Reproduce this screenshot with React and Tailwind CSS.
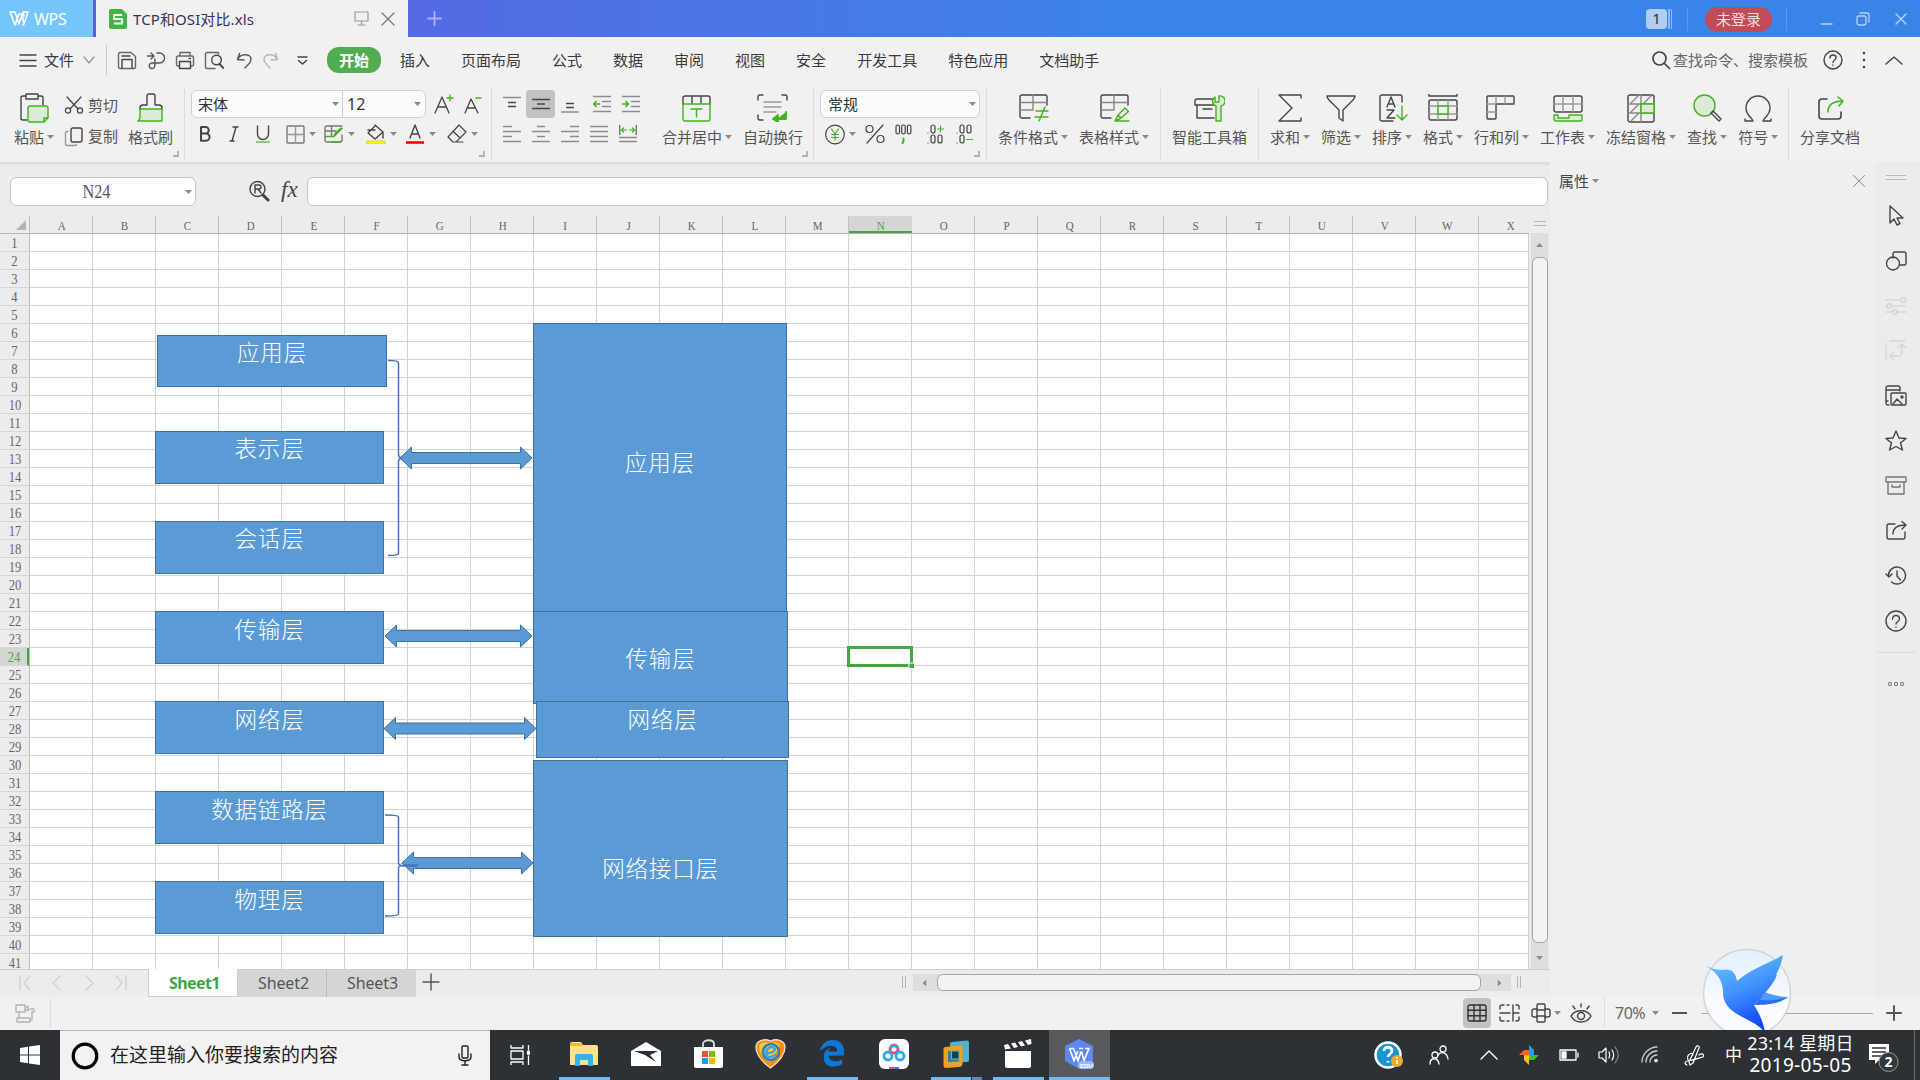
import React from "react";

const G = "#41b31d";
const D = "#444";

const Svg = ({ w, h, className = "", children, sw = 1.4, c = D }) => (
  <svg
    width={w}
    height={h}
    viewBox={`0 0 ${w} ${h}`}
    fill="none"
    stroke={c}
    strokeWidth={sw}
    strokeLinecap="round"
    strokeLinejoin="round"
    className={`shrink-0 ${className}`}
  >
    {children}
  </svg>
);

const Caret = ({ className = "" }) => (
  <svg width="7" height="4" viewBox="0 0 7 4" className={`shrink-0 ${className}`}>
    <path d="M0 0h7L3.5 4z" fill="#8a8a8a" />
  </svg>
);

const Corner = () => (
  <Svg w={6} h={6} sw={1.8} c="#b0b0b0"><path d="M5 0v5H0" strokeLinecap="butt" strokeLinejoin="miter" /></Svg>
);

const BigButton = ({ label, drop, children }) => (
  <div className="flex flex-col items-center shrink-0">
    <div className="h-[38px] flex items-center justify-center pr-[1px]">{children}</div>
    <div className="flex items-center h-[19px] mt-px -mb-px">
      <span>{label}</span>
      {drop && <Caret className="ml-[3px] mr-px mb-0.5" />}
    </div>
  </div>
);

const DropIcon = ({ children }) => (
  <div className="flex items-center gap-[4px] w-[31px] shrink-0">
    <div className="w-[20px] flex justify-center">{children}</div>
    <Caret />
  </div>
);

const Slot = ({ children, active }) => (
  <div className={`w-[29px] h-[28px] flex items-center justify-center shrink-0 rounded ${active ? "bg-[#c2c2c2]" : ""}`}>
    {children}
  </div>
);

/* horizontal rules used by the alignment buttons: [x1, x2, y, color] */
const Rules = ({ lines, w = 18, h = 18, children }) => (
  <svg width={w} height={h} viewBox={`0 0 ${w} ${h}`} fill="none" strokeWidth="1.5" className="shrink-0">
    {lines.map(([a, b, y, c], i) => (
      <path key={i} d={`M${a} ${y}H${b}`} stroke={c || "#8c8c8c"} />
    ))}
    {children}
  </svg>
);

const Group = ({ className, children }) => (
  <div className={`flex shrink-0 h-[72px] mt-[3px] border-r border-[#dcdcdc] ${className}`}>{children}</div>
);

const TitleBar = () => (
  <div className="h-[37px] flex bg-linear-to-r from-[#5a5ee0] from-5% to-[#3a84e7] to-60%">
    <div className="w-[93px] mr-[3px] bg-[#76c6fd] flex items-center text-white text-[16px] pl-[9px] gap-[5px]">
      <Svg w={20} h={15} c="#fff" sw={1.6}>
        <path d="M1 1h5l4 12 3-9M1 1l5 13L10 3h3l-2 0M13 4l2 9L19 1h-5l1 4M6 14l1-1M15 13l-1 1" />
      </Svg>
      <span className="tracking-[-0.3px]">WPS</span>
    </div>
    <div className="w-[312px] bg-[#f1f1f1] flex items-center pl-[13px]">
      <svg width="18" height="20" viewBox="0 0 18 20">
        <path d="M2 0h11l5 5v13a2 2 0 0 1-2 2H2a2 2 0 0 1-2-2V2a2 2 0 0 1 2-2z" fill="#45b245" />
        <path d="M13 6H5v4h8v4.5H5" fill="none" stroke="#fff" strokeWidth="1.8" />
      </svg>
      <span className="ml-[6px] w-[221px] text-[15px] tracking-[0.100px] text-[#34345a] whitespace-nowrap pt-px">TCP和OSI对比.xls</span>
      <Svg w={15} h={15} c="#9a9a9a" sw={1.2}><path d="M1 1h13v9H1zM7.500 10v4M4 14h7" /></Svg>
      <Svg w={14} h={14} c="#777" sw={1.2} className="ml-[12px]"><path d="M1 1l12 12M13 1L1 13" /></Svg>
    </div>
    <div className="w-[52px] flex items-center justify-center">
      <Svg w={15} h={15} c="#a9b6f4" sw={1.8}><path d="M7.500 1v13M1 7.500h13" /></Svg>
    </div>
    <div className="flex-1" />
    <div className="flex items-center text-[15px]">
      <div className="w-[21px] h-[20px] rounded-sm bg-[#b0cdf6] text-[#333] flex items-center justify-center">1</div>
      <div className="w-[2px] h-[20px] bg-[#93bbf2] ml-px" />
      <div className="w-[1px] h-[20px] bg-[#93bbf2] ml-px" />
      <div className="w-px h-[24px] bg-[#5c9aec] ml-[15px]" />
      <div className="w-[67px] h-[25px] ml-[17px] mt-[2px] rounded-full bg-[#c14b56] text-[#f3dcdf] flex items-center justify-center">未登录</div>
      <div className="w-px h-[24px] bg-[#5c9aec] ml-[14px]" />
      <Svg w={13} h={13} c="#b9d4f8" className="ml-[33px]"><path d="M1 12h11" /></Svg>
      <Svg w={14} h={14} c="#b9d4f8" sw={1.3} className="ml-[23px]">
        <rect x="1" y="4" width="9" height="9" rx="2" /><path d="M4 1h7a2 2 0 0 1 2 2v7" />
      </Svg>
      <Svg w={12} h={12} c="#b9d4f8" className="ml-[25px] mr-[13px]"><path d="M1 1l10 10M11 1L1 11" /></Svg>
    </div>
  </div>
);

const menus = ["插入", "页面布局", "公式", "数据", "审阅", "视图", "安全", "开发工具", "特色应用", "文档助手"];

const MenuBar = () => (
  <div className="h-[48px] bg-[#f1f1f1] flex items-center text-[15px] text-[#3a3a3a] pb-[2px]">
    <Svg w={18} h={13} className="ml-[19px]"><path d="M1 1h16M1 6.500h16M1 12h16" /></Svg>
    <span className="ml-[7px]">文件</span>
    <Svg w={12} h={8} c="#999" className="ml-[9px]"><path d="M1 1l5 6 5-6" /></Svg>
    <div className="w-px h-[30px] bg-[#c9c9c9] ml-[11px] mr-[10px]" />
    <div className="flex gap-[9px] items-center">
      <Svg w={20} h={19}>
        <path d="M3 1.500h11l4.500 4v10.500a1.500 1.500 0 0 1-1.500 1.500H3a1.500 1.500 0 0 1-1.500-1.500V3A1.500 1.500 0 0 1 3 1.500z" stroke="#666" />
        <path d="M5 17V8.500h10V17M5 5h8" />
      </Svg>
      <Svg w={20} h={19}>
        <path d="M1.500 5h6M5 2l3 3-3 3M11 2h2.500a5 5 0 0 1 0 10H6.500a2.800 2.800 0 1 0 2.300 3V8" stroke="#555" />
      </Svg>
      <Svg w={20} h={19}>
        <path d="M5 5V1.500h10V5M4.500 15H3a1.500 1.500 0 0 1-1.500-1.500v-7A1.500 1.500 0 0 1 3 5h14a1.500 1.500 0 0 1 1.500 1.500v7A1.500 1.500 0 0 1 17 15h-1" stroke="#666" />
        <path d="M4.500 10.500h11v7h-11zM14 7.500h1.500" />
      </Svg>
      <Svg w={20} h={19}>
        <path d="M14.500 3V1.500H3A1.500 1.500 0 0 0 1.500 3v13A1.500 1.500 0 0 0 3 17.500h8" stroke="#666" />
        <circle cx="12.500" cy="9" r="4.800" /><path d="M15.500 13l4 4" strokeWidth="1.900" />
      </Svg>
      <Svg w={20} h={19} className="ml-px">
        <path d="M5.500 2.500L3.500 8.500l6.500.5M4 8c2-5 13-6.500 13 .5 0 4-3.500 5-6 8.500" stroke="#555" />
      </Svg>
      <Svg w={18} h={19} c="#b5b5b5">
        <path d="M12.500 2.500l2 6-6.500.5M14 8C12 3 1 1.500 1 8.500c0 4 3.500 5 6 8.500" />
      </Svg>
      <Svg w={11} h={9} className="ml-[7px]" sw={1.500}><path d="M1 1h9M1.500 4.500l4 3.500 4-3.500" /></Svg>
    </div>
    <div className="w-[54px] h-[26px] rounded-xl bg-[#52ac52] text-white font-bold flex items-center justify-center ml-[19px] mr-[19px]">
      开始
    </div>
    <div className="flex gap-[31px] whitespace-nowrap">
      {menus.map((m) => (
        <span key={m}>{m}</span>
      ))}
    </div>
    <div className="flex-1" />
    <Svg w={20} h={20} sw={1.7} className="mr-px"><circle cx="8.500" cy="8.500" r="6.500" /><path d="M13.500 13.500l5 5" /></Svg>
    <span className="text-[#666] ml-px">查找命令、搜索模板</span>
    <Svg w={20} h={20} className="ml-[15px]">
      <circle cx="10" cy="10" r="9" /><path d="M7 8c0-4 6-4 6 0 0 2-3 2-3 4.500M10 15v.2" />
    </Svg>
    <Svg w={4} h={18} sw={2.600} className="ml-[19px]"><path d="M2 2v.1M2 9v.1M2 16v.1" /></Svg>
    <Svg w={18} h={10} className="ml-[19px] mr-[17px]"><path d="M1 9l8-7 8 7" /></Svg>
  </div>
);

const TableBase = () => (
  <>
    <path d="M11 24H3a2 2 0 0 1-2-2V3a2 2 0 0 1 2-2h23a2 2 0 0 1 2 2v8" />
    <path d="M1 8.500h27M1 16h12M14 1v15" stroke="#888" />
  </>
);

const Ribbon = () => (
  <div className="h-[77px] bg-[#f1f1f1] flex text-[15px] leading-[19px] text-[#555] whitespace-nowrap">
    <Group className="w-[185px]">
      <div className="ml-[14px] mt-px">
        <BigButton label="粘贴" drop>
          <Svg w={30} h={30}>
            <path d="M7 3H4a2 2 0 0 0-2 2v20a2 2 0 0 0 2 2h4M19 3h3a2 2 0 0 1 2 2v7M7 1h12v5H7z" />
            <path d="M11 13h16a2 2 0 0 1 2 2v10l-4 4H11a2 2 0 0 1-2-2V15a2 2 0 0 1 2-2zM29 25h-4v4" stroke={G} fill="#dcebd8" />
          </Svg>
        </BigButton>
      </div>
      <div className="ml-[9px] w-[54px]">
        <div className="flex items-center gap-[4px] h-[34px]">
          <Svg w={20} h={18} sw={1.200}>
            <path d="M3 1l11 12M17 1L6 13" /><circle cx="4" cy="14.500" r="2.600" /><circle cx="16" cy="14.500" r="2.600" />
          </Svg>
          剪切
        </div>
        <div className="flex items-center gap-[4px] h-[29px]">
          <Svg w={20} h={20}><rect x="7" y="1" width="11" height="14" rx="2" /><path d="M4 4.500H3A1.500 1.500 0 0 0 1.500 6v11A1.500 1.500 0 0 0 3 18.500h8a1.500 1.500 0 0 0 1.500-1" stroke="#999" /></Svg>
          复制
        </div>
      </div>
      <div className="ml-[10px] mt-px">
        <BigButton label="格式刷">
          <Svg w={28} h={30} className="mr-[-2px]">
            <path d="M3 16v-1a3 3 0 0 1 3-3h4V3a2 2 0 0 1 2-2h4a2 2 0 0 1 2 2v9h4a3 3 0 0 1 3 3v1" />
            <path d="M3 16h22v12H1c2-1 2-3 2-5z" stroke={G} fill="#dcebd8" />
          </Svg>
        </BigButton>
      </div>
      <div className="self-end mb-[3px]"><Corner /></div>
    </Group>

    <Group className="w-[307px] flex-col">
      <div className="flex items-center ml-[6px] mt-[2px] h-[28px]">
        <div className="w-[235px] h-[28px] rounded-md border border-[#cfcfcf] bg-[#fbfbfb] flex items-center text-[#333]">
          <div className="w-[151px] h-full border-r border-[#cfcfcf] flex items-center justify-between pl-[6px] pr-[3px]">宋体<Caret /></div>
          <div className="flex-1 flex items-center justify-between pl-[4px] pr-[4px] text-[16px]">12<Caret /></div>
        </div>
        <Svg w={20} h={20} className="ml-[8px]" sw={1.3}>
          <path d="M1 19L8 3l7 16M4 13h8" /><path d="M16 1v6M13 4h6" stroke={G} />
        </Svg>
        <Svg w={18} h={20} className="ml-[10px]" sw={1.3}>
          <path d="M1 19L7 5l7 14M3.500 14h7" /><path d="M12 4h5" stroke={G} />
        </Svg>
      </div>
      <div className="flex items-center ml-[5px] mt-[3px] h-[26px]">
        <Slot><Svg w={12} h={16} sw={2}><path d="M2 1h4.500a3.200 3.200 0 0 1 0 6.500H2zM2 7.500h5a3.600 3.600 0 0 1 0 7.200H2z" /></Svg></Slot>
        <Slot><Svg w={10} h={16}><path d="M4 1h5M1 15h4M7 1L3 15" /></Svg></Slot>
        <Slot>
          <Svg w={14} h={18}><path d="M1.500 1v8a5.500 5.500 0 0 0 11 0V1" /><path d="M0 17h14" stroke="#8fd07c" strokeWidth="2" /></Svg>
        </Slot>
        <div className="flex ml-[8px]">
          <DropIcon><Svg w={19} h={19}><rect x="1" y="1" width="17" height="17" rx="1" stroke="#777" /><path d="M9.500 1v17M1 9.500h17" stroke="#999" /></Svg></DropIcon>
          <div className="ml-[8px]">
            <DropIcon>
              <Svg w={20} h={19}>
                <path d="M18 11v5a2 2 0 0 1-2 2H3a2 2 0 0 1-2-2V4a2 2 0 0 1 2-2h15M7.500 2v10M1 7h11" stroke="#777" />
                <path d="M1 12.500h9l8-8M10 12.500l1-3 6-5.500M8 18h8" stroke={G} />
              </Svg>
            </DropIcon>
          </div>
          <div className="ml-[11px]">
            <DropIcon>
              <Svg w={20} h={20}>
                <path d="M9 1l8 7-8 7-7-6 7-7M2 6h7M17 8v6" /><rect x="1" y="17" width="18" height="3" fill="#ff0" stroke="#bdb800" strokeWidth=".6" />
              </Svg>
            </DropIcon>
          </div>
          <div className="ml-[8px]">
            <DropIcon>
              <Svg w={18} h={20}><path d="M4 14L9 1l5 13M5.500 10h7" /><path d="M0 18.500h18" stroke="red" strokeWidth="2.600" strokeLinecap="butt" /></Svg>
            </DropIcon>
          </div>
          <div className="ml-[11px]">
            <DropIcon>
              <Svg w={20} h={19} sw={1.200}><path d="M12 1l7 7-10 10H6l-5-5zM6 7l7 7M9 18h7" /></Svg>
            </DropIcon>
          </div>
        </div>
      </div>
      <div className="self-end mr-[6px] mt-[4px]"><Corner /></div>
    </Group>

    <Group className="w-[322px]">
      <div className="ml-[5px] mt-[2px] w-[150px]">
        <div className="flex">
          <Slot><Rules lines={[[0, 18, 2.500], [5, 13, 7.500, D], [5, 13, 11.500, D]]} /></Slot>
          <Slot active><Rules lines={[[0, 18, 4.500, D], [5, 13, 9, D], [0, 18, 13.500, D]]} /></Slot>
          <Slot><Rules lines={[[5, 13, 8.500, D], [5, 13, 12.500, D], [0, 18, 17]]} /></Slot>
          <div className="flex ml-[3px]">
            <Slot>
              <Rules lines={[[0, 18, 1.5], [9, 18, 6.500], [9, 18, 11.500], [0, 18, 16.500]]}><path d="M7 9H1M3.500 6L.7 9l2.800 3" stroke={G} /></Rules>
            </Slot>
            <Slot>
              <Rules lines={[[0, 18, 1.5], [9, 18, 6.500], [9, 18, 11.500], [0, 18, 16.500]]}><path d="M0 9h6M3.500 6l2.800 3-2.800 3" stroke={G} /></Rules>
            </Slot>
          </div>
        </div>
        <div className="flex mt-[2px]">
          <Slot><Rules lines={[[0, 9, 1.5], [0, 18, 6.500], [0, 9, 11.500], [0, 18, 16.500]]} /></Slot>
          <Slot><Rules lines={[[5, 13, 1.5], [0, 18, 6.500], [5, 13, 11.500], [0, 18, 16.500]]} /></Slot>
          <Slot><Rules lines={[[9, 18, 1.5], [0, 18, 6.500], [9, 18, 11.500], [0, 18, 16.500]]} /></Slot>
          <Slot><Rules lines={[[0, 18, 1.5], [0, 18, 6.500], [0, 18, 11.500], [0, 18, 16.500]]} /></Slot>
          <Slot>
            <Rules lines={[[0, 18, 12.500], [0, 18, 16.500]]}>
              <path d="M.7 0v10M17.300 0v10" stroke="#777" /><path d="M8 5H3M5 2.500L2.500 5 5 7.500M10 5h5M13 2.500L15.500 5 13 7.500" stroke={G} strokeWidth="1.200" />
            </Rules>
          </Slot>
        </div>
      </div>
      <div className="ml-[15px] mt-px">
        <BigButton label="合并居中" drop>
          <Svg w={29} h={27} className="mr-px">
            <path d="M1 9V3a2 2 0 0 1 2-2h23a2 2 0 0 1 2 2v6M10 1v7M19 1v7" />
            <path d="M1 9h27v15a2 2 0 0 1-2 2H3a2 2 0 0 1-2-2zM9 14h11M14.500 14v8" stroke={G} />
          </Svg>
        </BigButton>
      </div>
      <div className="ml-[10px] mt-px">
        <BigButton label="自动换行">
          <Svg w={31} h={28}>
            <path d="M1 6V3a2 2 0 0 1 2-2h3M25 1h3a2 2 0 0 1 2 2v3M1 21v3a2 2 0 0 0 2 2h3" />
            <path d="M7 8h17M7 13h17M7 18h12" stroke="#999" /><path d="M29 18v7H20M21 21l-5 4 5 3z" stroke={G} fill={G} strokeWidth="1.800" />
          </Svg>
        </BigButton>
      </div>
      <div className="self-end mb-[3px] ml-[-1px]"><Corner /></div>
    </Group>

    <Group className="w-[173px] flex-col">
      <div className="ml-[6px] mt-[2px] w-[160px] h-[28px] rounded-md border border-[#cfcfcf] bg-[#fbfbfb] flex items-center justify-between pl-[7px] pr-[3px] text-[#333] shrink-0">
        常规<Caret />
      </div>
      <div className="flex items-center ml-[11px] mt-[3px] h-[26px] text-[#333]">
        <Svg w={20} h={21} sw={1.200}><circle cx="10" cy="10.500" r="9.300" /><path d="M6.500 5l3.500 5 3.500-5M10 10v6M6.500 10.500h7M6.500 13.500h7" stroke={G} /></Svg>
        <Caret className="ml-[4px]" />
        <Svg w={20} h={20} sw={1.200} className="ml-[9px]"><circle cx="4.500" cy="5" r="3.500" /><circle cx="15.500" cy="15" r="3.500" /><path d="M18 1L2 19" /></Svg>
        <Svg w={17} h={20} className="ml-[10px]" sw={1.200}>
          <rect x="1" y="1" width="3.500" height="9" rx="1.700" /><rect x="6.700" y="1" width="3.500" height="9" rx="1.700" /><rect x="12.400" y="1" width="3.500" height="9" rx="1.700" />
          <path d="M8.500 14.500v2l-1 3" stroke={G} strokeWidth="2" />
        </Svg>
        <Svg w={17} h={20} className="ml-[15px]" sw={1.200}>
          <path d="M1 9v.1M1 19v.1" /><rect x="4" y="1" width="4" height="8" rx="2" /><rect x="4" y="11" width="4" height="8" rx="2" /><rect x="11" y="11" width="4" height="8" rx="2" />
          <path d="M10.500 5h6M13.500 2v6" stroke={G} />
        </Svg>
        <Svg w={17} h={20} className="ml-[12px]" sw={1.200}>
          <path d="M1 9v.1M1 19v.1" /><rect x="4" y="1" width="4" height="8" rx="2" /><rect x="11" y="1" width="4" height="8" rx="2" /><rect x="4" y="11" width="4" height="8" rx="2" />
          <path d="M10.500 15.500h6" stroke={G} />
        </Svg>
      </div>
      <div className="self-end mr-[6px] mt-[4px]"><Corner /></div>
    </Group>

    <Group className="w-[174px] pl-[11px] gap-[10px] pt-px">
      <BigButton label="条件格式" drop>
        <Svg w={31} h={28} className="ml-[2px]"><TableBase /><path d="M17 17h12M16 23h13M26 13l-6 14" stroke={G} /></Svg>
      </BigButton>
      <BigButton label="表格样式" drop>
        <Svg w={31} h={28} className="ml-[2px]"><TableBase /><path d="M15 27l3-6 7-7 3.500 3.500L21 24l-6 3h14M18 21l3 3" stroke={G} /></Svg>
      </BigButton>
    </Group>

    <Group className="w-[98px] pl-[11px] pt-px">
      <BigButton label="智能工具箱">
        <Svg w={31} h={28}>
          <path d="M20 11H1V7a2 2 0 0 1 2-2h16M3 11v13h17M9 15h9" />
          <path d="M22 27V12a5 5 0 0 1-1-9v5h4V2a5 5 0 0 1 2 10v15z" stroke={G} fill="#dcebd8" />
        </Svg>
      </BigButton>
    </Group>

    <Group className="w-[530px] pl-[11px] gap-[10px] pt-px">
      <BigButton label="求和" drop>
        <Svg w={24} h={28}><path d="M23 4V1H1l13 13L1 27h22v-3" /></Svg>
      </BigButton>
      <BigButton label="筛选" drop>
        <Svg w={30} h={28}><path d="M1 2h28c0 2-1 3-2 4L17 16v11l-4-3v-8L3 6C2 5 1 4 1 2z" /></Svg>
      </BigButton>
      <BigButton label="排序" drop>
        <Svg w={29} h={28} className="ml-[2px]">
          <path d="M14 27H3a2 2 0 0 1-2-2V3a2 2 0 0 1 2-2h18a2 2 0 0 1 2 2v5" />
          <path d="M8 13l4-10 4 10M9.500 10h5M8 16h7L8 24h8" /><path d="M23 12v14M18 21l5 5 5-5" stroke={G} />
        </Svg>
      </BigButton>
      <BigButton label="格式" drop>
        <Svg w={30} h={28}>
          <path d="M1 0v2h28V0" /><rect x="1" y="6" width="28" height="20" rx="2" />
          <path d="M10 6v20M20 6v20M1 12h28M1 20h28" stroke="#999" /><path d="M10 12h10v8H10z" stroke={G} fill="#f1f1f1" />
        </Svg>
      </BigButton>
      <BigButton label="行和列" drop>
        <Svg w={29} h={26} className="mr-[2px]">
          <path d="M10 9v14a1 1 0 0 1-1 1H2a1 1 0 0 1-1-1V2a1 1 0 0 1 1-1h25a1 1 0 0 1 1 1v7z" />
          <path d="M10 1v8M19 1v8M1 9h9M1 17h9" stroke="#999" />
        </Svg>
      </BigButton>
      <BigButton label="工作表" drop>
        <Svg w={30} h={27}>
          <rect x="1" y="1" width="28" height="16" rx="2" /><path d="M10 1v16M20 1v16M1 9h28" stroke="#999" />
          <path d="M1 20h4v3h11v-3h13v4a2 2 0 0 1-2 2H3a2 2 0 0 1-2-2z" stroke={G} fill="#dcebd8" />
        </Svg>
      </BigButton>
      <BigButton label="冻结窗格" drop>
        <Svg w={28} h={29} className="mr-px">
          <rect x="1" y="1" width="26" height="27" rx="2" />
          <path d="M14 1v27M1 10h26M1 19h26M4 9l8-8M17 9l8-8M4 18l8-8M4 27l8-8" stroke="#888" />
          <path d="M14 10h13v9H14z" stroke={G} fill="#dcebd8" />
        </Svg>
      </BigButton>
      <BigButton label="查找" drop>
        <Svg w={29} h={28}>
          <circle cx="11.500" cy="11.500" r="10.500" stroke={G} fill="#dcebd8" /><path d="M18 19l8 8 2-2-8-8z" />
        </Svg>
      </BigButton>
      <BigButton label="符号" drop>
        <Svg w={28} h={28}><path d="M1 25v2h8c0-3-7-5-7-13a12 12 0 0 1 24 0c0 8-7 10-7 13h8v-2" /></Svg>
      </BigButton>
    </Group>
    <div className="pl-[11px] pt-[4px]">
      <BigButton label="分享文档">
        <Svg w={26} h={24} sw={1.600} className="ml-[3px]">
          <path d="M9 3H4a3 3 0 0 0-3 3v14a3 3 0 0 0 3 3h16a3 3 0 0 0 3-3v-4" />
          <path d="M10 16c0-7 5-11 15-11M20 1l5 4-4 5" stroke={G} />
        </Svg>
      </BigButton>
    </div>
  </div>
);

const FormulaBar = () => (
  <div className="h-[54px] flex pt-[15px] bg-linear-to-b from-[#d9d9d9] to-[#ececec] to-[5px] shrink-0">
    <div className="w-[186px] h-[29px] ml-[10px] rounded-md border border-[#c4c4c4] bg-white flex items-center">
      <span className="flex-1 text-center pr-[4px] pt-px font-['Liberation_Serif','Noto_Sans_CJK_SC',serif] text-[18px] text-[#555]">
        <span className="inline-block scale-x-90">N24</span>
      </span>
      <Caret className="mr-[3px]" />
    </div>
    <Svg w={22} h={22} className="ml-[52px] mt-[3px]" sw={1.400}>
      <circle cx="9.500" cy="9" r="7.500" /><path d="M15 15l5 5" strokeWidth="3" /><path d="M7 13V5h4a2 2 0 0 1 0 4H7M10 9l3 4" />
    </Svg>
    <span className="ml-[11px] mt-[-4px] w-[24px] font-['Liberation_Serif',serif] italic text-[23px] text-[#444]">fx</span>
    <div className="w-[1241px] h-[29px] ml-[2px] rounded-md border border-[#c4c4c4] bg-white" />
  </div>
);

const columns = "ABCDEFGHIJKLMNOPQRSTUVWX".split("");
const rows = Array.from({ length: 41 }, (_, i) => i + 1);

const boxes = [
  { x: 157, y: 335, w: 230, h: 52, t: "应用层", ty: 352 },
  { x: 155, y: 431, w: 229, h: 53, t: "表示层", ty: 448 },
  { x: 155, y: 521, w: 229, h: 53, t: "会话层", ty: 538 },
  { x: 155, y: 611, w: 229, h: 53, t: "传输层", ty: 629 },
  { x: 155, y: 701, w: 229, h: 53, t: "网络层", ty: 719 },
  { x: 155, y: 791, w: 229, h: 53, t: "数据链路层", ty: 809 },
  { x: 155, y: 881, w: 229, h: 53, t: "物理层", ty: 899 },
  { x: 533, y: 323, w: 254, h: 289, t: "应用层", ty: 462 },
  { x: 533, y: 611, w: 255, h: 93, t: "传输层", ty: 658 },
  { x: 536, y: 701, w: 253, h: 57, t: "网络层", ty: 719 },
  { x: 533, y: 760, w: 255, h: 177, t: "网络接口层", ty: 868 },
];

const arrows = [
  [400, 532, 458],
  [385, 532, 636],
  [384, 536, 728.5],
  [402, 533, 863],
];

/* Shapes floating over the cells, in window coordinates shifted by the sheet origin (30, 234) */
const Drawing = () => (
  <div className="absolute inset-0 overflow-hidden">
    {boxes.map((b, i) => (
      <div
        key={i}
        className="absolute bg-[#5b9bd5] border border-[#41719c] text-white text-center font-light text-[22.500px] leading-[30px] tracking-[0.800px] whitespace-nowrap"
        style={{ left: b.x - 30, top: b.y - 234, width: b.w, height: b.h, paddingTop: b.ty - b.y - 17 }}
      >
        {b.t}
      </div>
    ))}
    <svg width="1498" height="735" viewBox="30 234 1498 735" className="absolute left-0 top-0" fill="none">
      {arrows.map(([a, b, y]) => (
        <path
          key={y}
          d={`M${a} ${y}l11.500 -11v5.500H${b - 11.5}v-5.500L${b} ${y}l-11.500 11v-5.500H${a + 11.5}v5.500z`}
          fill="#5b9bd5"
          stroke="#41719c"
        />
      ))}
      <g stroke="#4472c4" strokeWidth="1.500">
        <path d="M388 360.500c8 0 10.500 1 10.500 2v92c0 2 1 3 3 3.500-2 .5-3 1.500-3 3.500v92c0 1-2.500 2-10.500 2" />
        <path d="M385 815c10 0 13.500 1 13.500 2v46c0 1.500 2 2.500 5 2.500-3 0-5 1-5 2.500v46c0 1-3.500 2-13.500 2" />
        <path d="M403 865.500h15" strokeWidth="2.500" />
      </g>
      <rect x="848.500" y="647.500" width="63" height="18" stroke="#45a743" strokeWidth="3" />
      <rect x="909" y="663" width="5.500" height="5.500" fill="#45a743" stroke="#fff" />
    </svg>
  </div>
);

const Sheet = () => (
  <div className="w-[1529px] shrink-0 font-['Liberation_Serif',serif] text-[13px] text-[#666]">
    <div className="h-[18px] flex border-b border-[#b4b4b4] overflow-hidden bg-[#ececec]">
      <div className="w-[30px] shrink-0 border-r border-[#bdbdbd] flex items-end justify-end pr-[3px] pb-[3px]">
        <svg width="10" height="10" viewBox="0 0 10 10"><path d="M10 0v10H0z" fill="#b4b4b4" /></svg>
      </div>
      {columns.map((c) =>
        c === "N" ? (
          <div key={c} className="w-[63px] shrink-0 flex items-center justify-center bg-[#d5d5d5] text-[#45a743] border-b-2 border-[#45a743] pt-[5px]">
            <span className="scale-x-[.85]">{c}</span>
          </div>
        ) : (
          <div key={c} className="w-[63px] shrink-0 flex items-center justify-center border-r border-[#c0c0c0] pt-[3px] pl-px">
            <span className="scale-x-[.85]">{c}</span>
          </div>
        )
      )}
    </div>
    <div className="flex h-[735px] overflow-hidden">
      <div className="w-[30px] shrink-0 border-r border-[#bdbdbd] bg-[#ececec] text-[14px] leading-[14px]">
        {rows.map((r) => (
          <div
            key={r}
            className={`h-[18px] border-b border-[#d6d6d6] flex items-center justify-center pt-[3px] ${r === 24 ? "bg-[#d5d5d5] text-[#45a743] border-r-2 border-r-[#45a743]" : ""}`}
          >
            <span className="scale-x-[.9]">{r}</span>
          </div>
        ))}
      </div>
      <div className="relative flex-1 bg-white border-r border-[#d0d0d0] font-['Noto_Sans_CJK_SC',sans-serif] bg-[linear-gradient(to_right,transparent_62px,#d3d3d3_62px),linear-gradient(to_bottom,transparent_17px,#d3d3d3_17px)] bg-size-[63px_18px]">
        <Drawing />
      </div>
    </div>
  </div>
);

const VScroll = () => (
  <div className="w-[20px] shrink-0 flex flex-col items-center pl-px pt-[5px]">
    <div className="w-[12px] h-[5px] border-y border-[#b5b5b5]" />
    <div className="w-[17px] h-[736px] mt-[7px] bg-[#dedede] flex flex-col items-center">
      <div className="h-[24px] flex items-center"><Caret className="rotate-180" /></div>
      <div className="w-[16px] h-[686px] rounded-md border border-[#a5a5a5] bg-[#f3f3f3]" />
      <div className="h-[26px] flex items-center pt-1"><Caret /></div>
    </div>
  </div>
);

const SheetTabs = () => (
  <div className="h-[28px] flex bg-[#ececec] border-t border-[#cfcfcf] text-[16px] text-[#555]">
    <div className="flex items-center gap-[20px] pl-[19px] w-[148px] shrink-0 pb-[2px]">
      <Svg w={12} h={16} c="#d2d2d2"><path d="M1 1v14M11 1L5 8l6 7" /></Svg>
      <Svg w={12} h={16} c="#d2d2d2"><path d="M9 1L2 8l7 7" /></Svg>
      <Svg w={12} h={16} c="#d2d2d2"><path d="M3 1l7 7-7 7" /></Svg>
      <Svg w={12} h={16} c="#d2d2d2"><path d="M11 1v14M1 1l6 7-6 7" /></Svg>
    </div>
    <div className="w-[90px] -mt-px bg-white border-x border-b border-[#cfcfcf] text-[#3fa53f] font-bold flex items-center justify-center pl-[3px] tracking-[-0.600px]">Sheet1</div>
    <div className="w-[89px] bg-[#d5d5d5] border-r border-[#bcbcbc] flex items-center justify-center pl-[3px] pb-[2px] tracking-[-0.100px]">Sheet2</div>
    <div className="w-[89px] bg-[#d5d5d5] flex items-center justify-center pl-[2px] pb-[2px] tracking-[-0.100px]">Sheet3</div>
    <Svg w={18} h={18} c="#555" className="ml-[6px] mt-[3px]"><path d="M9 1v16M1 9h16" /></Svg>
    <div className="flex-1" />
    <div className="w-[4px] h-[12px] mt-[6px] border-x border-[#b5b5b5] mr-[7px]" />
    <div className="w-[598px] h-[17px] mt-[4px] bg-[#dedede] flex items-center">
      <Caret className="rotate-90 ml-[8px]" />
      <div className="w-[544px] h-[17px] rounded-md border border-[#a5a5a5] bg-[#f3f3f3] ml-[9px]" />
      <Caret className="-rotate-90 ml-[15px]" />
    </div>
    <div className="w-[4px] h-[12px] mt-[6px] border-x border-[#b5b5b5] ml-[6px] mr-[29px]" />
  </div>
);

const side = [
  <Svg w={20} h={22}><path d="M4 1v17l4-4 3 6 3-1.500-3-5.500h6z" /></Svg>,
  <Svg w={22} h={20}><path d="M8 7V3a2 2 0 0 1 2-2h9a2 2 0 0 1 2 2v9a2 2 0 0 1-2 2h-4" /><circle cx="8" cy="12.500" r="6.500" /></Svg>,
  <Svg w={22} h={20} c="#d6d6d6"><path d="M1 4h15M6 10h15M1 16h7M12 16h9" /><circle cx="18.500" cy="4" r="2.300" /><circle cx="4" cy="10" r="2.300" /><circle cx="10" cy="16" r="2.300" /></Svg>,
  <Svg w={22} h={21} c="#d6d6d6"><path d="M1 1v.5M5 1h15M1 5v15M6 16h7a4 4 0 0 0 4-4V5M9 12l-4 4 4 4M13 8l4-4 4 4" /></Svg>,
  <Svg w={22} h={21}><path d="M4 20H3a2 2 0 0 1-2-2V3a2 2 0 0 1 2-2h10a2 2 0 0 1 2 2v3M1 5h14M1 16h2" /><rect x="6" y="8" width="15" height="12" rx="1" /><path d="M8 19l4-5 5 5" /><circle cx="17" cy="12" r="1" /></Svg>,
  <Svg w={22} h={21}><path d="M11 1l3 7 7 .5-5.500 4.500 2 7L11 16.500 4.500 20l2-7L1 8.500 8 8z" /></Svg>,
  <Svg w={22} h={19} c="#777"><path d="M1 1h20v5H1zM3 6v12h16V6M7 9v2h8V9" /></Svg>,
  <Svg w={22} h={20} className="mb-[2px]"><path d="M10 4H4a2 2 0 0 0-2 2v11a2 2 0 0 0 2 2h14a2 2 0 0 0 2-2v-5M8 14c0-6 5-9 13-9M17 1.500L21 5l-4 4" /></Svg>,
  <Svg w={22} h={19}><path d="M3.500 10a8.500 8.500 0 1 1 3 6M1 8l3 3 3-3M12 5v5l3.500 4" /></Svg>,
  <Svg w={22} h={22}><circle cx="11" cy="11" r="10" /><path d="M7.500 9c0-5 7-4.500 7 0 0 2.500-3.500 2.500-3.500 5M11 17v.2" /></Svg>,
];

const TaskPane = () => (
  <>
    <div className="w-[325px] shrink-0 bg-[#efefef] flex items-start pt-[8px] text-[15px] text-[#444]">
      <span className="ml-[9px]">属性</span>
      <Caret className="ml-[3px] mt-[9px]" />
      <Svg w={12} h={12} c="#888" sw={1} className="ml-auto mr-[10px] mt-[5px]"><path d="M.5.5l11 11M11.500.5l-11 11" /></Svg>
    </div>
    <div className="w-[45px] shrink-0 bg-[#ececec] flex flex-col items-center pr-[3px]">
      <div className="w-[20px] h-[5px] mt-[13px] border-y border-[#b9b9b9] mb-[13px]" />
      {side.map((s, i) => (
        <div key={i} className="h-[45px] flex items-center">{s}</div>
      ))}
      <div className="w-[38px] h-px bg-[#dadada] mt-[9px]" />
      <Svg w={18} h={6} c="#888" sw={1.200} className="mt-[28px]"><circle cx="3" cy="3" r="1.600" /><circle cx="9" cy="3" r="1.600" /><circle cx="15" cy="3" r="1.600" /></Svg>
    </div>
  </>
);

const StatusBar = () => (
  <div className="h-[33px] bg-[#f1f1f1] flex items-center text-[#666] text-[16px] pb-px">
    <Svg w={20} h={20} c="#b3b3b3" className="ml-[15px]"><path d="M1 2h9v7H1zM10 5l3-2v5l-3-2M4 9v6M2 15h13v4H2zM15 6h4v3h-2v8h-2" /></Svg>
    <div className="w-px h-[30px] bg-[#dedede] ml-[15px]" />
    <div className="flex-1" />
    <div className="w-[28px] h-[30px] rounded-sm bg-[#c2c2c2] flex items-center justify-center">
      <Svg w={20} h={18} c="#333"><rect x="1" y="1" width="18" height="16" rx="2" /><path d="M7 1v16M13 1v16M1 6.300h18M1 11.700h18" /></Svg>
    </div>
    <Svg w={21} h={18} className="ml-[8px]"><path d="M1 5V3a2 2 0 0 1 2-2h2M8 1h2M14 1v16M17 1h1a2 2 0 0 1 2 2v2M1 9h10M14 9h6M1 13v2a2 2 0 0 0 2 2h2M8 17h2M17 17h1a2 2 0 0 0 2-2v-2" /></Svg>
    <Svg w={20} h={20} className="ml-[11px]"><rect x="6" y="1" width="8" height="18" rx="1" /><path d="M6 6H3a2 2 0 0 0-2 2v4a2 2 0 0 0 2 2h3M14 6h3a2 2 0 0 1 2 2v4a2 2 0 0 1-2 2h-3M6 7h8M6 13h8" /></Svg>
    <Caret className="ml-[3px]" />
    <Svg w={22} h={20} className="ml-[9px]"><path d="M1 13c4-7 16-7 20 0-4 8-16 8-20 0zM3 3l2 3M11 1v3M19 3l-2 3" /><circle cx="11" cy="13" r="3.500" /></Svg>
    <div className="w-px h-[30px] bg-[#dedede] ml-[12px]" />
    <span className="ml-[10px] w-[32px] tracking-[-0.500px]">70%</span>
    <Caret className="ml-[5px]" />
    <div className="w-[15px] h-[2px] bg-[#555] ml-[13px]" />
    <div className="w-[172px] h-px bg-[#aaa] ml-[14px]" />
    <Svg w={16} h={16} c="#555" sw={2} className="ml-[13px] mr-[18px]"><path d="M8 1v14M1 8h14" /></Svg>
  </div>
);

const Bird = () => (
  <div className="absolute left-[1701px] top-[947px] w-[92px] h-[83px] overflow-hidden">
    <svg width="92" height="92" viewBox="0 0 92 92">
      <defs>
        <linearGradient id="bird" x1="0.2" y1="0" x2="0.6" y2="1">
          <stop offset="0" stopColor="#6cc4ff" /><stop offset=".5" stopColor="#3d8ffc" /><stop offset="1" stopColor="#0b3bff" />
        </linearGradient>
        <linearGradient id="disc" x1="0" y1="0" x2="0" y2="1">
          <stop offset="0" stopColor="#e2f0fc" /><stop offset=".7" stopColor="#fafcff" />
        </linearGradient>
      </defs>
      <circle cx="46" cy="46" r="43.500" fill="url(#disc)" stroke="#d3d5d8" strokeWidth="1.500" />
      <path d="M62 48c6 2 16 3 25 2-9 7-20 8-34 8z" fill="#2a6cf5" />
      <path d="M64 45c7 3 15 5 23 5-8 3-18 4-28 3z" fill="#4f9cff" />
      <path d="M5 19c7 3 12 4 17 4 8-2 13 3 14 11C48 23 66 17 82 8c-1 6-3 12-7 20l1 0c-3 7-8 14-14 20-3 4-6 6-9 10 5 8 10 18 11 28C54 70 22 70 22 45 22 34 16 25 5 19z" fill="url(#bird)" />
    </svg>
  </div>
);

const AppSlot = ({ children, bar, stacked }) => (
  <div className="w-[62px] h-full flex flex-col items-center shrink-0">
    <div className="h-[47px] flex items-center justify-center">{children}</div>
    {bar && (
      <div className="w-[51px] h-[3px] bg-[#76b9ed] flex justify-end">
        {stacked && <div className="w-[11px] h-[3px] bg-[#5b8cb5] border-l border-[#2c2f33]" />}
      </div>
    )}
  </div>
);

const Taskbar = () => (
  <div className="h-[50px] bg-[#2d3034] flex items-center">
    <div className="w-[60px] flex justify-center">
      <svg width="20" height="20" viewBox="0 0 20 20" fill="#fff"><path d="M0 3l8-1.200V9.500H0zM9 1.600L20 0v9.500H9zM0 10.500h8v7.700L0 17zM9 10.500h11V20L9 18.400z" /></svg>
    </div>
    <div className="w-[430px] h-[50px] bg-[#f2f2f2] border-t border-[#b5b5b5] flex items-center">
      <svg width="28" height="28" viewBox="0 0 28 28" className="ml-[11px]"><circle cx="14" cy="14" r="11.800" fill="none" stroke="#000" strokeWidth="3.200" /></svg>
      <span className="ml-[11px] text-[19px] text-[#222]">在这里输入你要搜索的内容</span>
      <Svg w={16} h={21} c="#222" className="ml-auto mr-[17px]"><rect x="5" y="1" width="6" height="12" rx="1" /><path d="M2 9v3c0 5 12 5 12 0V9M8 16v4M5 20h6" /></Svg>
    </div>
    <div className="w-[60px] flex justify-center">
      <Svg w={20} h={20} c="#fff" sw={1.300}><path d="M1 0v3h12V0M1 20v-3h12v3M1 6h12v8H1zM18.500 0v5M18.500 11v9" /><rect x="17.500" y="6.500" width="2" height="2.500" fill="#fff" /></Svg>
    </div>
    <div className="flex h-[50px] ml-[3px]">
      <AppSlot bar>
        <svg width="28" height="24" viewBox="0 0 28 24">
          <path d="M0 2a2 2 0 0 1 2-2h9l2 3h13a2 2 0 0 1 2 2v18H0z" fill="#ffe08c" /><path d="M0 1h11l2 3H0z" fill="#f7b916" />
          <path d="M5 24V14a2 2 0 0 1 2-2h14a2 2 0 0 1 2 2v10h-5v-6h-8v6z" fill="#37b2ea" />
        </svg>
      </AppSlot>
      <AppSlot>
        <svg width="30" height="24" viewBox="0 0 30 24"><path d="M0 9L15 0l15 9v15H0z" fill="#fff" /><path d="M3 9h24l-8 4 6 7-11-7z" fill="#2c2f33" /></svg>
      </AppSlot>
      <AppSlot>
        <svg width="29" height="29" viewBox="0 0 29 29">
          <path d="M0 8h29v19a2 2 0 0 1-2 2H2a2 2 0 0 1-2-2z" fill="#fff" /><path d="M9 8V5c0-5 11-5 11 0v3" fill="none" stroke="#ddd" strokeWidth="1.800" />
          <path d="M8 12h6v6H8z" fill="#f25022" /><path d="M15 12h6v6h-6z" fill="#7fba00" /><path d="M8 19h6v6H8z" fill="#00a4ef" /><path d="M15 19h6v6h-6z" fill="#ffb900" />
        </svg>
      </AppSlot>
      <AppSlot>
        <svg width="31" height="31" viewBox="0 0 31 31">
          <path d="M15.500 30C6 23 1 16 1 9c0-6 8-9 14.500-6C22 0 30 3 30 9c0 7-5 14-14.500 21z" fill="#ff8a12" stroke="#f3dfc5" strokeWidth="1.300" />
          <path d="M14 24C7 18 4 14 4 9c0-4 6-6 11-4 5-2 9 0 10 2-4 10-8 13-11 17z" fill="#ffc73c" />
          <circle cx="16" cy="14" r="8" fill="none" stroke="#1f86c9" strokeWidth="2.600" />
          <path d="M12 15c9 0 10-6 5-6-6 0-8 9-3 10 3 .5 5-1 7-3" fill="none" stroke="#3fa0dd" strokeWidth="2.400" />
        </svg>
      </AppSlot>
      <AppSlot bar>
        <svg width="25" height="27" viewBox="0 0 26 28">
          <path d="M0 12C1 4 7 0 13 0c8 0 12 5 12 12v4H9c0 6 8 8 14 4v5C12 31 3 26 4 17c0-5 4-8 7-9-2 2-2 3-2 4h9c0-8-12-8-18 0z" fill="#0c78d7" />
        </svg>
      </AppSlot>
      <AppSlot>
        <svg width="30" height="30" viewBox="0 0 30 30">
          <rect width="30" height="30" rx="6" fill="#fff" />
          <g fill="none" strokeWidth="2.800"><circle cx="15" cy="10" r="4" stroke="#f0466a" /><circle cx="9" cy="17" r="4" stroke="#29a8f5" /><circle cx="21" cy="17" r="4" stroke="#29a8f5" /><path d="M11.500 9a4 4 0 0 1 7 0" stroke="#29a8f5" /></g>
          <path d="M10 28h5v2h-5z" fill="#f0466a" /><path d="M15 28h5v2h-5z" fill="#2f7df6" />
        </svg>
      </AppSlot>
      <AppSlot bar stacked>
        <svg width="27" height="28" viewBox="0 0 27 28">
          <path d="M9 2l15-1.500a2 2 0 0 1 2 2V20a2 2 0 0 1-2 2L9 23a2 2 0 0 1-2-2V4a2 2 0 0 1 2-2z" fill="#56b0c8" />
          <path d="M2.500 7L17 5.500a2 2 0 0 1 2.500 2V23a4 4 0 0 1-4 4L3 28a2.500 2.500 0 0 1-2.500-2.500V9a2 2 0 0 1 2-2z" fill="#eea320" />
          <path d="M5 11l11-.5v11L5 22z" fill="#2f7f98" /><path d="M8.500 11h7.500v8H8.500z" fill="#143f52" stroke="#5cbad2" />
        </svg>
      </AppSlot>
      <AppSlot bar>
        <svg width="28" height="29" viewBox="0 0 28 29" fill="#fff">
          <path d="M1 12h26v15a2 2 0 0 1-2 2H3a2 2 0 0 1-2-2z" /><path d="M0 6l4-1 3 4.500-6 1zM7 4.500l4-1 3 4.500-4 1zM14 3l4-1 3 4.500-4 1zM21 1.500L27 0l.5 5-3.500 1z" />
        </svg>
      </AppSlot>
      <div className="w-[61px] h-full bg-[#57595d] flex flex-col items-center shrink-0">
        <div className="h-[47px] flex items-center justify-center">
          <svg width="30" height="32" viewBox="0 0 30 32">
            <path d="M14 1l14 7v15l-14 8L0 23V8z" fill="#5f87f2" /><path d="M4.500 10.500h4l4.500 12 3-9M4.500 10.500l4.500 12 4-9.500M14 10.500h4M16.500 13.500l2.500 9 5-12h-4" fill="none" stroke="#fff" strokeWidth="1.600" />
            <rect x="13" y="23" width="16" height="8" rx="4" fill="#9bb8ff" />
            <text x="15" y="29.500" fontSize="6" fill="#fff" fontWeight="bold" fontFamily="Liberation Sans">EDU</text>
          </svg>
        </div>
        <div className="w-full h-[3px] bg-[#76b9ed]" />
      </div>
    </div>
    <div className="flex-1" />
    <svg width="30" height="28" viewBox="0 0 30 28">
      <circle cx="14" cy="14" r="12.500" fill="#1594d2" stroke="#fff" strokeWidth="2.500" /><path d="M10 10c0-5 8-5 8 0 0 3-4 3-4 6M14 20v1.500" fill="none" stroke="#fff" strokeWidth="2.800" />
      <circle cx="23" cy="20" r="6" fill="#f0ab23" /><path d="M23 19v4M23 16v1.500" stroke="#fff" strokeWidth="2" />
    </svg>
    <Svg w={20} h={20} c="#fff" sw={1.300} className="ml-[25px]"><circle cx="6" cy="10" r="3" /><circle cx="14" cy="4" r="3" /><path d="M1 19c0-7 8-7 9 0M9 10c3-4 9-3 10 4" /></Svg>
    <Svg w={18} h={10} c="#fff" className="ml-[31px]"><path d="M1 9l8-8 8 8" /></Svg>
    <svg width="20" height="20" viewBox="0 0 20 20" className="ml-[21px]">
      <path d="M10 0l5 5v5h-5z" fill="#2d9bf0" /><path d="M20 10l-5 5h-5v-5z" fill="#3fc11c" /><path d="M10 20l-5-5v-5h5z" fill="#fbc117" /><path d="M0 10l5-5h5v5z" fill="#f4641e" />
    </svg>
    <Svg w={20} h={12} c="#fff" sw={1.300} className="ml-[20px]"><path d="M1 1h16v10H1zM19 4v4" /><rect x="3" y="3" width="4" height="6" fill="#fff" /></Svg>
    <Svg w={21} h={18} c="#fff" sw={1.200} className="ml-[19px]"><path d="M1 6v6h3l4 4V2L4 6zM11 6c1 2 1 4 0 6M14 4c2 3 2 7 0 10" /><path d="M17 1c4 5 4 11 0 16" stroke="#888" /></Svg>
    <Svg w={18} h={18} c="#fff" sw={1.300} className="ml-[22px]"><path d="M1 16C1 8 8 1 16 1M5 16C5 10 10 5 16 5M9 16c0-4 3-7 7-7" stroke="#ccc" /><circle cx="15" cy="14.500" r="1.200" fill="#fff" /></Svg>
    <Svg w={21} h={21} c="#fff" sw={1.200} className="ml-[25px]"><path d="M3 20c-3-1-2-4 1-4 5-1 8-2 15-4 2-3-2-4-4-2M5 17L12 2c1-2 4-1 3 1L9 18l-3 2zM4 15c-2-5 4-9 5-5" /></Svg>
    <span className="ml-[20px] text-white text-[17px] leading-[20px]">中</span>
    <div className="ml-[5px] w-[107px] text-white text-[18px] leading-[22px] text-center whitespace-nowrap pb-[2px]">
      <div className="tracking-[0.200px]">23:14 星期日</div>
      <div className="text-[19px] tracking-[0.300px]">2019-05-05</div>
    </div>
    <svg width="32" height="32" viewBox="0 0 32 32" className="ml-[14px] mr-[14px] mt-[6px]">
      <path d="M1 2h20v16h-10l-4 4v-4H1z" fill="#fff" /><path d="M4 6h14M4 10h14M4 14h9" stroke="#2c2f33" strokeWidth="1.300" />
      <circle cx="20.500" cy="20" r="9.500" fill="#33363b" stroke="#999" />
      <text x="20.500" y="25" fontSize="14" fill="#fff" textAnchor="middle" fontWeight="bold" fontFamily="Noto Sans">2</text>
    </svg>
    <div className="w-px h-[50px] bg-[#6a6c70] mr-[5px]" />
  </div>
);

export default function App() {
  return (
    <div className="relative w-[1920px] h-[1080px] overflow-hidden flex flex-col bg-[#ececec] font-['Noto_Sans','Noto_Sans_CJK_SC',sans-serif]">
      <TitleBar />
      <MenuBar />
      <Ribbon />
      <div className="flex h-[835px]">
        <div className="w-[1550px] shrink-0 flex flex-col">
          <FormulaBar />
          <div className="flex h-[753px]">
            <Sheet />
            <VScroll />
          </div>
          <SheetTabs />
        </div>
        <TaskPane />
      </div>
      <StatusBar />
      <Taskbar />
      <Bird />
    </div>
  );
}
